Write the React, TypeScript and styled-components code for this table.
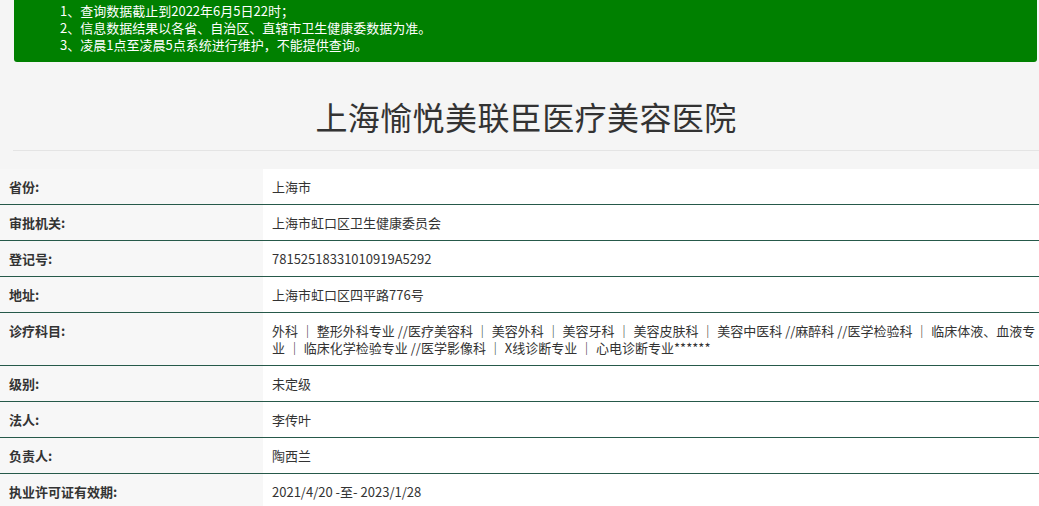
import React from "react";
import styled, { createGlobalStyle } from "styled-components";

const Global = createGlobalStyle`
  html, body { margin: 0; padding: 0; background: #f5f5f5; }
  body { font-family: "Noto Sans CJK SC", "Noto Sans", sans-serif; color: #333; overflow: hidden; }
`;

const Page = styled.div`
  width: 1039px;
  display: flex;
  flex-direction: column;
`;

const Notice = styled.div`
  margin-left: 14px;
  width: 1023px;
  box-sizing: border-box;
  background: #008000;
  border-radius: 0 0 3px 3px;
  padding: 2px 0 9px 46px;
  color: #fff;
  font-size: 13px;
  line-height: 17px;
`;

const NoticeLine = styled.div`
  white-space: nowrap;
`;

const TitleBlock = styled.div`
  margin-left: 13px;
  height: 88px;
  border-bottom: 1px solid #e4e4e4;
  display: flex;
  align-items: center;
  justify-content: center;
`;

const Title = styled.h1`
  margin: 0;
  padding-top: 20px;
  font-size: 32px;
  font-weight: 400;
  color: #333;
  letter-spacing: 0.4px;
`;

const Table = styled.div`
  margin-top: 18px;
  display: flex;
  flex-direction: column;
`;

const Row = styled.div<{ $last?: boolean }>`
  display: grid;
  grid-template-columns: 263px 1fr;
  border-bottom: ${(p) => (p.$last ? "none" : "1px solid #26594a")};
`;

const Label = styled.div`
  background: #f7f7f7;
  padding: 9px 9px;
  font-size: 13px;
  line-height: 17px;
  font-weight: 700;
  color: #333;
`;

const Value = styled.div`
  background: #fff;
  padding: 9px 0 9px 9px;
  font-size: 13px;
  line-height: 17px;
  color: #333;
`;

const rows: [string, string][] = [
  ["省份:", "上海市"],
  ["审批机关:", "上海市虹口区卫生健康委员会"],
  ["登记号:", "78152518331010919A5292"],
  ["地址:", "上海市虹口区四平路776号"],
  [
    "诊疗科目:",
    "外科 ｜ 整形外科专业 //医疗美容科 ｜ 美容外科 ｜ 美容牙科 ｜ 美容皮肤科 ｜ 美容中医科 //麻醉科 //医学检验科 ｜ 临床体液、血液专业 ｜ 临床化学检验专业 //医学影像科 ｜ X线诊断专业 ｜ 心电诊断专业******",
  ],
  ["级别:", "未定级"],
  ["法人:", "李传叶"],
  ["负责人:", "陶西兰"],
  ["执业许可证有效期:", "2021/4/20 -至- 2023/1/28"],
];

export default function App() {
  return (
    <>
      <Global />
      <Page>
        <Notice>
          <NoticeLine>1、查询数据截止到2022年6月5日22时；</NoticeLine>
          <NoticeLine>2、信息数据结果以各省、自治区、直辖市卫生健康委数据为准。</NoticeLine>
          <NoticeLine>3、凌晨1点至凌晨5点系统进行维护，不能提供查询。</NoticeLine>
        </Notice>
        <TitleBlock>
          <Title>上海愉悦美联臣医疗美容医院</Title>
        </TitleBlock>
        <Table>
          {rows.map(([k, v], i) => (
            <Row key={k} $last={i === rows.length - 1}>
              <Label>{k}</Label>
              <Value>{v}</Value>
            </Row>
          ))}
        </Table>
      </Page>
    </>
  );
}
